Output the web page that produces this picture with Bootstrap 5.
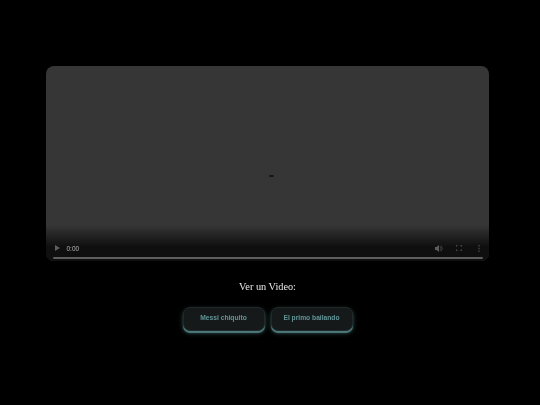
<!DOCTYPE html>
<html lang="es">
<head>
<meta charset="utf-8">
<title>Ver un Video</title>
<link rel="stylesheet" href="https://cdn.jsdelivr.net/npm/bootstrap@5.3.0/dist/css/bootstrap.min.css">
<style>
html, body { background: #000; height: 405px; overflow: hidden; }
.stage { padding: 66px 51px 0 46px; will-change: transform; }
.player { height: 195px; background: #363636; border-radius: 8px; overflow: hidden; }
.player-main { flex: 1 1 auto; display: flex; align-items: center; justify-content: center; }
.spinner-dot { width: 5px; height: 2px; background: #161616; border-radius: 1px; margin-left: 7px; margin-top: 60px; }
.player-bar { height: 36px; padding: 0 6px 2px 7px; background: linear-gradient(to bottom, rgba(0,0,0,0), rgba(0,0,0,.72) 60%, #0f0f0f); }
.ctl-row { height: 22px; padding: 4px 3px 0 1.500px; gap: 9px; color: #8c8c8c; }
.gap-fs { margin-left: 4px; }
.gap-more { margin-left: 7px; }
.time-text { font: 6.5px "Liberation Sans", Arial, sans-serif; color: #b8b8b8; margin-left: -2px; }
.track { height: 2px; background: #5e5e5e; border-radius: 1px; }
.title-text { font: 10.3px "Liberation Serif", "Times New Roman", serif; color: #e8e8e8; margin: 19px 0 0; line-height: 14px; }
.clip-row { gap: 6px; margin-top: 13px; }
.clip-btn { width: 82px; height: 24px; padding: 0 0 3px; background: #15191a; border: 1px solid #20292a; border-radius: 7px; color: #639698; font: bold 6.7px "Liberation Sans", Arial, sans-serif; box-shadow: 0 2px 1px #4f7a7c, 0 2px 5px rgba(95,150,150,.45); }
.clip-btn:hover { background: #15191a; color: #639698; border-color: #20292a; }
svg { display: block; }
</style>
</head>
<body>
<main class="stage">
  <div class="player d-flex flex-column">
    <div class="player-main"><div class="spinner-dot"></div></div>
    <div class="player-bar d-flex flex-column justify-content-end">
      <div class="ctl-row d-flex align-items-center">
        <svg width="5" height="6" viewBox="0 0 5 6"><path d="M0 0l5 3-5 3z" fill="#5e5e5e"/></svg>
        <span class="time-text">0:00</span>
        <span class="flex-grow-1"></span>
        <svg width="8" height="7" viewBox="0 0 8 7"><path d="M0 2h1.500L4 0v7L1.500 5H0z" fill="#5c5c5c"/><path d="M5 1.500a3 3 0 0 1 0 4M6 .5a4.500 4.500 0 0 1 0 6" fill="none" stroke="#484848" stroke-width=".8"/></svg>
        <svg class="gap-fs" width="6" height="6" viewBox="0 0 6 6"><path d="M0 2V0h2M4 0h2v2M6 4v2H4M2 6H0V4" fill="none" stroke="#565656" stroke-width="1"/></svg>
        <svg class="gap-more" width="2" height="7" viewBox="0 0 2 7"><path d="M.5 0h1v1.500h-1zM.5 2.750h1v1.500h-1zM.5 5.500h1V7h-1z" fill="#5c5c5c"/></svg>
      </div>
      <div class="track"></div>
    </div>
  </div>
  <p class="title-text text-center">Ver un Video:</p>
  <div class="clip-row d-flex justify-content-center">
    <button type="button" class="btn clip-btn">Messi chiquito</button>
    <button type="button" class="btn clip-btn">El primo bailando</button>
  </div>
</main>
<script src="https://cdn.jsdelivr.net/npm/bootstrap@5.3.0/dist/js/bootstrap.bundle.min.js"></script>
</body>
</html>
